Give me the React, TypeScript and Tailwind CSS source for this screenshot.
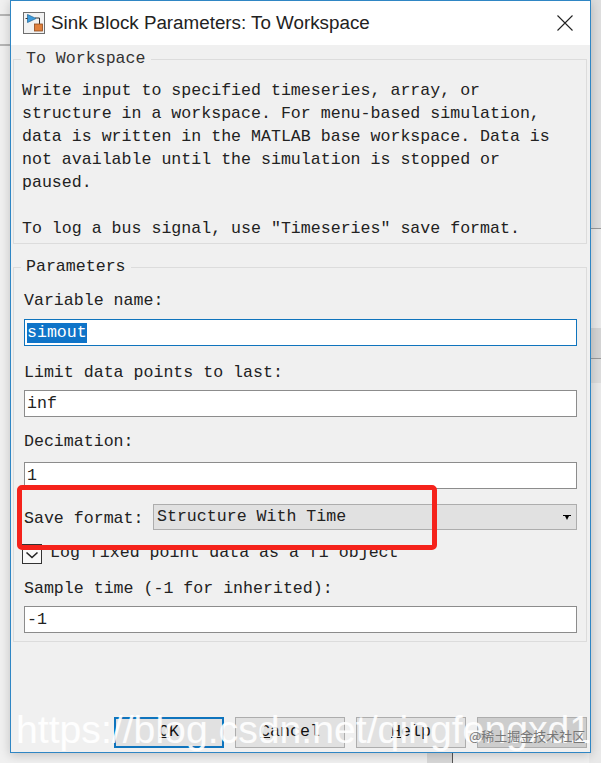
const mono = "font-['Liberation_Mono','DejaVu_Sans_Mono',monospace]";

function BlockIcon() {
  return (
    <svg width="22" height="22" viewBox="0 0 22 22" className="shrink-0">
      <rect x="0.5" y="0.5" width="21" height="21" fill="#f2f2f2" stroke="#6e6e6e" />
      <path d="M12 6H16.5V12" fill="none" stroke="#333" />
      <path d="M4.5 2.5V10.5L13 6.5Z" fill="#3d9bdc" stroke="#2a6f9e" strokeWidth="0.8" />
      <path d="M2.5 6.5H4.5" stroke="#333" />
      <rect x="11.5" y="12" width="8" height="7" fill="#e0803c" stroke="#8f4a1c" strokeWidth="0.8" />
    </svg>
  );
}

function FieldLabel({ children }: { children: React.ReactNode }) {
  return <div className="text-[16.6px] leading-5 text-[#222]">{children}</div>;
}

function TextField({ value, active }: { value: string; active?: boolean }) {
  return (
    <div className={`h-[27px] w-full border bg-white pl-[2px] text-[16.6px] leading-[25px] text-[#222] ${active ? "border-[#0f74bd]" : "border-[#8c8c8c]"}`}>
      {active ? <span className="mt-[2px] inline-block bg-[#0f74c8] text-[16.6px] leading-[20px] text-white">{value}</span> : value}
    </div>
  );
}

function DialogButton({ children, primary, disabled }: { children?: React.ReactNode; primary?: boolean; disabled?: boolean }) {
  return (
    <div className={`flex h-[31px] w-[110px] items-center justify-center text-[16.6px] text-[#111] ${disabled ? "bg-[#cdcdcd]" : "bg-[#e1e1e1]"} ${primary ? "border-2 border-[#0f74bd]" : "border border-[#adadad]"}`}>
      {children}
    </div>
  );
}

export default function App() {
  return (
    <div className={`relative h-[763px] w-[601px] overflow-hidden bg-[#f0f0f0] ${mono}`}>
      {/* bits of the window behind the dialog */}
      <div className="absolute left-0 top-[14px] h-[2px] w-[12px] bg-[#b5b5b5]" />
      <div className="absolute left-0 top-[44px] h-[2px] w-[12px] bg-[#b5b5b5]" />
      <div className="absolute right-0 top-0 h-[228px] w-[12px] bg-[#dedede]" />
      <div className="absolute right-0 top-[228px] h-[1px] w-[12px] bg-[#9a9a9a]" />
      <div className="absolute right-0 top-[229px] h-[534px] w-[12px] bg-[#e9e9e9]" />
      <div className="absolute right-0 top-[328px] h-[30px] w-[12px] bg-[#d4d4d4]" />
      <div className="absolute right-0 top-[358px] h-[1px] w-[12px] bg-[#9a9a9a]" />
      <div className="absolute right-0 top-[359px] h-[24px] w-[12px] bg-[#dcdcdc]" />
      <div className="absolute left-[427px] top-[750px] h-[13px] w-[25px] bg-[#d8d8d8]" />
      <div className="absolute left-[452px] top-[750px] h-[13px] w-[1px] bg-[#555]" />

      <div className="relative ml-[10px] flex h-[753px] w-[581px] flex-col border border-[#2f86c4] bg-[#f0f0f0] shadow-[0_2px_10px_rgba(0,0,0,0.2)]">
        <div className="flex h-[44px] shrink-0 items-center bg-white pl-[12px] pr-[17px]">
          <BlockIcon />
          <span className="ml-[6px] flex-1 font-['Liberation_Sans',Arial,sans-serif] text-[18.8px] text-[#222]">Sink Block Parameters: To Workspace</span>
          <svg width="16" height="16" viewBox="0 0 16 16">
            <path d="M0.5 0.5 15.5 15.5M15.5 0.5 0.5 15.5" stroke="#222" strokeWidth="1.1" />
          </svg>
        </div>

        <div className="flex flex-1 flex-col pl-[2px] pr-[3px]">
          <fieldset className="mt-[4px] h-[195px] shrink-0 border border-[#dcdcdc] pl-[8px] pr-[4px]">
            <legend className="-ml-[1px] px-[5px] text-[16.6px] leading-5 text-[#333]">To Workspace</legend>
            <p className="mt-[10px] text-[16.6px] leading-[23px] whitespace-pre-line text-[#222]">
              {"Write input to specified timeseries, array, or\nstructure in a workspace. For menu-based simulation,\ndata is written in the MATLAB base workspace. Data is\nnot available until the simulation is stopped or\npaused.\n\nTo log a bus signal, use \"Timeseries\" save format."}
            </p>
          </fieldset>

          <fieldset className="mt-[13px] h-[385px] shrink-0 border border-[#dcdcdc] pl-[10px] pr-[9px]">
            <legend className="-ml-[3px] px-[5px] text-[16.6px] leading-5 text-[#222]">Parameters</legend>
            <div className="mt-[14px] flex flex-col">
              <FieldLabel>Variable name:</FieldLabel>
              <div className="mt-[8px]"><TextField value="simout" active /></div>
              <div className="mt-[17px]"><FieldLabel>Limit data points to last:</FieldLabel></div>
              <div className="mt-[7px]"><TextField value="inf" /></div>
              <div className="mt-[15px]"><FieldLabel>Decimation:</FieldLabel></div>
              <div className="mt-[10px]"><TextField value="1" /></div>
              <div className="mt-[14px] flex items-center">
                <span className="w-[129px] shrink-0 pt-[4px] text-[16.6px] text-[#222]">Save format:</span>
                <div className="flex h-[26px] flex-1 items-center border border-[#adadad] bg-[#e1e1e1] pl-[3px] pr-[5px] text-[16.6px] text-[#222]">
                  <span className="flex-1">Structure With Time</span>
                  <svg width="8" height="5" viewBox="0 0 8 5"><path d="M0 0H8V1H6L4 5 2 1H0Z" fill="#000" /></svg>
                </div>
              </div>
              <div className="mt-[12px] flex h-[20px] items-center">
                <div className="-ml-[2px] flex h-[20px] w-[20px] shrink-0 items-center justify-center border border-[#333] bg-[#f8f8f8]">
                  <svg width="14" height="14" viewBox="0 0 14 14"><path d="M1.5 5.5 7 10.5 12.5 5.5" fill="none" stroke="#222" strokeWidth="1.6" /></svg>
                </div>
                <span className="ml-[8px] text-[16.6px] text-[#222]">Log fixed point data as a fi object</span>
              </div>
              <div className="mt-[15px]"><FieldLabel>Sample time (-1 for inherited):</FieldLabel></div>
              <div className="mt-[7px]"><TextField value="-1" /></div>
            </div>
          </fieldset>

          <div className="mt-[75px] flex justify-end gap-[11px]">
            <DialogButton primary><span><u>O</u>K</span></DialogButton>
            <DialogButton><span><u>C</u>ancel</span></DialogButton>
            <DialogButton><span><u>H</u>elp</span></DialogButton>
            <DialogButton disabled />
          </div>
        </div>
      </div>

      {/* annotation and watermarks laid over the screenshot */}
      <div className="absolute left-[17px] top-[485px] h-[65px] w-[420px] rounded-[5px] border-[5px] border-[#f5221b]" />
      <div className="absolute left-[16px] top-[705px] whitespace-nowrap font-['Liberation_Sans',Arial,sans-serif] text-[39.2px] leading-[50px] text-white/90">https://blog.csdn.net/qingfengxd1</div>
      <div className="absolute left-[469px] top-[726px] whitespace-nowrap font-['Noto_Sans_CJK_SC',sans-serif] text-[13px] text-[#777]">@稀土掘金技术社区</div>
    </div>
  );
}
